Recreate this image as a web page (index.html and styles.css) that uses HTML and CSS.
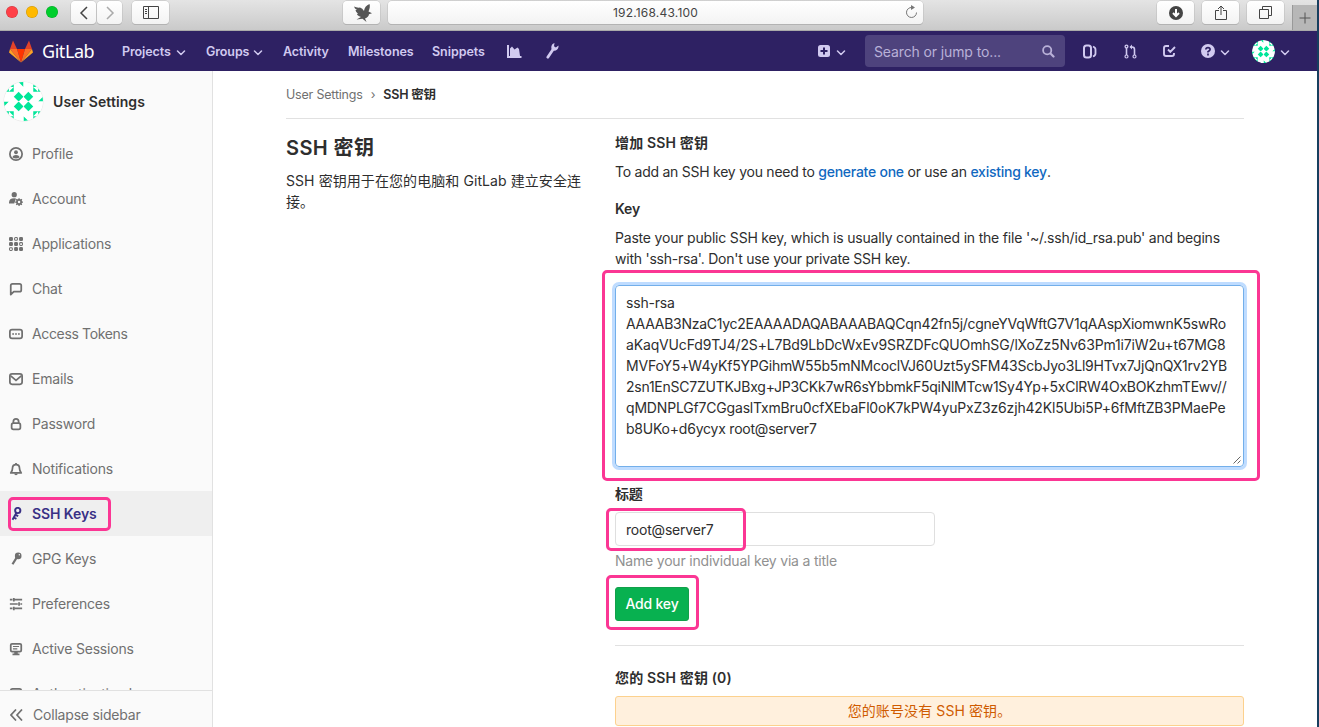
FILE: index.html
```html
<!DOCTYPE html>
<html lang="zh"><head><meta charset="utf-8"><title>SSH 密钥</title><link rel="stylesheet" href="styles.css"></head>
<body>
<svg class="defs" width="0" height="0">
<symbol id="chev" viewBox="0 0 10 6"><path d="M1.500 1L5 4.500 8.500 1" fill="none" stroke="currentColor" stroke-width="1.500" stroke-linecap="round" stroke-linejoin="round"/></symbol>
<symbol id="quad" viewBox="0 0 20 20"><path d="M15 10l5 5-5 5-5-5zM15 0H20V5zM10 0V5H5zM10 5V10H5zM5 5V10H0z" fill="#00e699"/></symbol>
<symbol id="avatar" viewBox="0 0 40 40"><circle cx="20" cy="20" r="20" fill="#fff"/><use href="#quad" width="20" height="20"/><use href="#quad" width="20" height="20" transform="rotate(90 20 20)"/><use href="#quad" width="20" height="20" transform="rotate(180 20 20)"/><use href="#quad" width="20" height="20" transform="rotate(270 20 20)"/></symbol>
</svg>
<div class="window">
<header class="chrome">
 <div class="lights"><i class="red"></i><i class="amber"></i><i class="green"></i></div>
 <div class="key back"><svg width="10" height="14" viewBox="0 0 10 14"><path d="M8 1L2 7l6 6" fill="none" stroke="#444" stroke-width="1.500"/></svg></div>
 <div class="key fwd"><svg width="10" height="14" viewBox="0 0 10 14"><path d="M2 1l6 6-6 6" fill="none" stroke="#aaa" stroke-width="1.500"/></svg></div>
 <div class="key panel"><svg width="16" height="13" viewBox="0 0 16 13"><path d="M.5.5h15v12H.5zM5.500.5v12M2 3.500h2M2 5.500h2M2 7.500h2" fill="none" stroke="#444"/></svg></div>
 <div class="key bird"><svg width="18" height="18" viewBox="0 0 18 18"><path d="M0 2.500Q3 4 6 3.500 8.500 4 10 7 10.500 2 15.500 0 16.500 3 14.500 7.500L18 9.200l-3 1q-.5 3-4 4.300l1.500 3.500-4-3.200-6 .7 4.500-2.500Q3 11.500 3 10l1-.3Q1.500 7.500 1.500 6L3 6Q.5 4.500 0 2.500z" fill="#555"/></svg></div>
 <div class="key address"><span class="url">192.168.43.100</span><svg class="reload" width="13" height="14" viewBox="0 0 13 14"><path d="M7 2.500A5 5 0 1 0 11.500 7.500" fill="none" stroke="#777"/><path d="M6 0l4 2.500L6 5z" fill="#777"/></svg></div>
 <div class="key download"><svg width="14" height="14" viewBox="0 0 14 14"><circle cx="7" cy="7" r="7" fill="#444"/><path d="M7 3v6M4 7l3 3 3-3" fill="none" stroke="#fff" stroke-width="2"/></svg></div>
 <div class="key share"><svg width="12" height="16" viewBox="0 0 12 16"><path d="M4 5.500H.5v9h11v-9H8M6 10V1M3 4l3-3 3 3" fill="none" stroke="#444"/></svg></div>
 <div class="key tabs"><svg width="13" height="13" viewBox="0 0 13 13"><path d="M.5 3.500h9v9h-9zM3.500 3V.5h9v9H10" fill="none" stroke="#444"/></svg></div>
 <div class="newtab"><svg width="12" height="12" viewBox="0 0 12 12"><path d="M6 .5v11M.5 6h11" stroke="#555"/></svg></div>
</header>
<nav class="navbar">
 <svg class="tanuki" width="24" height="23" viewBox="0 0 24 23"><path d="M4 .5L1 9h7zM20 .5L23 9h-7z" fill="#e24329"/><path d="M12 22.500L8 9h8z" fill="#ff3300"/><path d="M12 22.500L1 9h7zM12 22.500L23 9h-7z" fill="#fc6d26"/><path d="M1 9L0 12.500 12 22.500zM23 9l1 3.500-12 10z" fill="#fca326"/></svg>
 <span class="brand">GitLab</span>
 <span class="link n1">Projects</span><svg class="chev c1" width="10" height="6"><use href="#chev"/></svg>
 <span class="link n2">Groups</span><svg class="chev c2" width="10" height="6"><use href="#chev"/></svg>
 <span class="link n3">Activity</span><span class="link n4">Milestones</span><span class="link n5">Snippets</span>
 <svg class="i-chart" width="15" height="13" viewBox="0 0 15 13"><path d="M1 0v12h13.500" fill="none" stroke="currentColor" stroke-width="2"/><path d="M3 11V3.500L5 1.500 7.500 4.500 9 3.500 10.500 2.500 12 4l1 7z" fill="currentColor"/></svg>
 <svg class="i-wrench" width="13" height="16" viewBox="0 0 13 16"><path d="M1.800 14.200L7 6.500" stroke="currentColor" stroke-width="2.800" stroke-linecap="round"/><path d="M8.500 0C5.500 1 4.700 4 5.800 6.500c2 2 5.700 1.500 6.700-2.500V2.500L9.800 4.500 8 3.200z" fill="currentColor"/></svg>
 <svg class="i-plus" width="12" height="12" viewBox="0 0 12 12"><rect width="12" height="12" rx="2.500" fill="currentColor"/><path d="M6 2.500v7M2.500 6h7" stroke="#2e2163" stroke-width="2"/></svg><svg class="chev c3" width="10" height="6"><use href="#chev"/></svg>
 <div class="search"><span>Search or jump to...</span><svg width="13" height="13" viewBox="0 0 13 13"><circle cx="5.200" cy="5.200" r="4.100" fill="none" stroke="currentColor" stroke-width="1.800"/><path d="M8.500 8.500l3 3" stroke="currentColor" stroke-width="2.200" stroke-linecap="round"/></svg></div>
 <svg class="i-issues" width="14" height="15" viewBox="0 0 14 15"><rect x="1" y="1.500" width="7" height="12" rx="2.500" fill="none" stroke="currentColor" stroke-width="2"/><path d="M10 2.500q2.500 1 2.500 3v4q0 2-2.500 3" fill="none" stroke="currentColor" stroke-width="1.800"/></svg>
 <svg class="i-merge" width="13" height="15" viewBox="0 0 13 15"><path d="M2.500 4v7M10.500 11V5.500Q10.500 3 8 3H6.500" fill="none" stroke="currentColor" stroke-width="1.600"/><circle cx="2.500" cy="2.500" r="1.400" fill="none" stroke="currentColor" stroke-width="1.300"/><circle cx="2.500" cy="12.500" r="1.500" fill="none" stroke="currentColor" stroke-width="1.200"/><circle cx="10.500" cy="12.500" r="1.500" fill="none" stroke="currentColor" stroke-width="1.200"/><path d="M8 .5v5L5.500 3z" fill="currentColor"/></svg>
 <svg class="i-todo" width="13" height="12" viewBox="0 0 13 12"><path d="M6 1H3Q1 1 1 3v6q0 2 2 2h6q2 0 2-2V8M5 4.500l2.300 2.300L12 2" fill="none" stroke="currentColor" stroke-width="1.900"/></svg>
 <svg class="i-help" width="14" height="14" viewBox="0 0 14 14"><circle cx="7" cy="7" r="7" fill="currentColor"/><path d="M4.800 5.500Q5 3.700 7 3.700t2.100 1.800Q9.100 6.500 7 7.700v.8M7 9.500v2" fill="none" stroke="#2e2163" stroke-width="1.700"/></svg><svg class="chev c4" width="10" height="6"><use href="#chev"/></svg>
 <svg class="face" width="23" height="23"><use href="#avatar"/></svg><svg class="chev c5" width="10" height="6"><use href="#chev"/></svg>
</nav>
<div class="page">
<aside class="sidebar">
 <div class="context"><svg class="portrait" width="39" height="39"><use href="#avatar"/></svg><strong>User Settings</strong></div>
 <ul class="menu">
 <li><svg viewBox="0 0 16 16"><circle cx="8" cy="8" r="7" fill="none" stroke="currentColor" stroke-width="2"/><circle cx="8" cy="6" r="2.200" fill="currentColor"/><path d="M4 12q0-3 4-3t4 3q-4 2.500-8 0" fill="currentColor"/></svg><span>Profile</span></li>
 <li><svg viewBox="0 0 16 16"><circle cx="6" cy="3" r="3" fill="currentColor"/><path d="M0 13v-1q0-5 6-5l2 .3L6 13z" fill="currentColor"/><circle cx="11.500" cy="11.500" r="2.400" fill="none" stroke="currentColor" stroke-width="2"/><path d="M11.500 7v2m0 5v2M7 11.500h2m5 0h2M8.300 8.300l1.400 1.400m3.600 3.600l1.400 1.400m0-6.400l-1.400 1.400m-3.600 3.600l-1.400 1.400" stroke="currentColor" stroke-width="1.500"/></svg><span>Account</span></li>
 <li><svg viewBox="0 0 16 16"><g fill="currentColor"><rect width="4.500" height="4.500" rx="1.500"/><rect x="11.500" width="4.500" height="4.500" rx="1.500"/><rect y="5.800" width="4.500" height="4.500" rx="1.500"/><rect x="5.800" y="5.800" width="4.500" height="4.500" rx="1.500"/><rect x="5.800" y="11.500" width="4.500" height="4.500" rx="1.500"/><rect x="11.500" y="11.500" width="4.500" height="4.500" rx="1.500"/></g><g fill="none" stroke="currentColor" stroke-width="1.200"><rect x="6.400" y=".6" width="3.200" height="3.200" rx="1"/><rect x="12.200" y="6.400" width="3.200" height="3.200" rx="1"/><rect x=".6" y="12.200" width="3.200" height="3.200" rx="1"/></g></svg><span>Applications</span></li>
 <li><svg viewBox="0 0 16 16"><path d="M2 14.500V4q0-2 2-2h8q2 0 2 2v5q0 2-2 2H5.500z" fill="none" stroke="currentColor" stroke-width="2" stroke-linejoin="round"/></svg><span>Chat</span></li>
 <li class="tokens"><svg viewBox="0 0 16 16"><rect x="1" y="3" width="14" height="10" rx="2.500" fill="none" stroke="currentColor" stroke-width="2"/><path d="M3.700 8h2m1.300 0h2m1.300 0h2" stroke="currentColor" stroke-width="1.800"/></svg><span>Access Tokens</span></li>
 <li><svg viewBox="0 0 16 16"><rect x="1" y="2" width="14" height="12" rx="2.500" fill="none" stroke="currentColor" stroke-width="2"/><path d="M2 4.500l6 5 6-5" fill="none" stroke="currentColor" stroke-width="2"/></svg><span>Emails</span></li>
 <li><svg viewBox="0 0 16 16"><rect x="3" y="7" width="10" height="7" rx="2" fill="none" stroke="currentColor" stroke-width="2"/><path d="M5 7V5q0-3 3-3t3 3v2" fill="none" stroke="currentColor" stroke-width="2"/></svg><span>Password</span></li>
 <li><svg viewBox="0 0 16 16"><path d="M2 12.500Q4 10 4 7q0-4 4-4t4 4q0 3 2 5.500z" fill="none" stroke="currentColor" stroke-width="2" stroke-linejoin="round"/><path d="M7 1h2v2H7zM6 13h4q0 2-2 2t-2-2" fill="currentColor"/></svg><span>Notifications</span></li>
 <li class="active"><svg viewBox="0 0 16 16"><circle cx="10" cy="4" r="3" fill="none" stroke="currentColor" stroke-width="2.200"/><path d="M8.500 6.500L4 14.500M7.500 9l3 1.500M5.500 12l3 1.500" stroke="currentColor" stroke-width="2.200"/></svg><span>SSH Keys</span><b class="mark m-nav"></b></li>
 <li><svg viewBox="0 0 16 16"><circle cx="10.500" cy="4.500" r="3.800" fill="currentColor"/><path d="M9 6L4 14" stroke="currentColor" stroke-width="2.600"/><circle cx="11.800" cy="3.200" r=".8" fill="#fafafa"/></svg><span>GPG Keys</span></li>
 <li><svg viewBox="0 0 16 16"><path d="M1 3h3m1 0h10M1 8h9m3 0h2M1 13h3m2 0h9" stroke="currentColor" stroke-width="1.800"/><path d="M5.500 1v4M11.500 6v4M5.500 11v4" stroke="currentColor" stroke-width="2"/></svg><span>Preferences</span></li>
 <li><svg viewBox="0 0 16 16"><rect x="2" y="2" width="12" height="9" rx="1.500" fill="none" stroke="currentColor" stroke-width="2"/><path d="M4.500 5.200h7M4.500 7.800h5" stroke="currentColor" stroke-width="1.300"/><path d="M6 11h4v2h2v2H4v-2h2z" fill="currentColor"/></svg><span>Active Sessions</span></li>
 <li><svg viewBox="0 0 16 16"><rect x="2" y="2" width="12" height="12" rx="2" fill="none" stroke="currentColor" stroke-width="2"/></svg><span>Authentication log</span></li>
 </ul>
 <div class="collapse"><svg width="13" height="12" viewBox="0 0 13 12"><path d="M6 .5L1 6l5 5.500M12 .5L7 6l5 5.500" fill="none" stroke="currentColor" stroke-width="1.700"/></svg><span>Collapse sidebar</span></div>
</aside>
<main class="content">
 <div class="crumbs"><span class="t-crumb">User Settings</span><i>›</i><strong>SSH 密钥</strong></div>
 <div class="columns">
 <section class="about"><h1>SSH 密钥</h1><p>SSH 密钥用于在您的电脑和 GitLab 建立安全连接。</p></section>
 <section class="form">
 <h5>增加 SSH 密钥</h5>
 <p class="intro">To add an SSH key you need to <a>generate one</a> or use an <a>existing key</a>.</p>
 <label class="l-key">Key</label>
 <p class="help"><span class="h1">Paste your public SSH key, which is usually contained in the file '~/.ssh/id_rsa.pub' and begins</span><br><span class="h2">with 'ssh-rsa'. Don't use your private SSH key.</span></p>
 <div class="keybox"><span>ssh-rsa</span><span class="k1">AAAAB3NzaC1yc2EAAAADAQABAAABAQCqn42fn5j/cgneYVqWftG7V1qAAspXiomwnK5swRo</span><span class="k2">aKaqVUcFd9TJ4/2S+L7Bd9LbDcWxEv9SRZDFcQUOmhSG/lXoZz5Nv63Pm1i7iW2u+t67MG8</span><span class="k3">MVFoY5+W4yKf5YPGihmW55b5mNMcoclVJ60Uzt5ySFM43ScbJyo3Ll9HTvx7JjQnQX1rv2YB</span><span class="k4">2sn1EnSC7ZUTKJBxg+JP3CKk7wR6sYbbmkF5qiNlMTcw1Sy4Yp+5xClRW4OxBOKzhmTEwv//</span><span class="k5">qMDNPLGf7CGgaslTxmBru0cfXEbaFl0oK7kPW4yuPxZ3z6zjh42Kl5Ubi5P+6fMftZB3PMaePe</span><span class="k6">b8UKo+d6ycyx root@server7</span>
 <svg class="grip" width="8" height="8" viewBox="0 0 8 8"><path d="M.5 7.500l7-7M4.500 7.500l3-3" stroke="#555" stroke-width=".9"/></svg><b class="mark m-key"></b></div>
 <label class="l-title">标题</label>
 <div class="field"><span>root@server7</span><b class="mark m-field"></b></div>
 <p class="hint">Name your individual key via a title</p>
 <div class="submit">Add key<b class="mark m-submit"></b></div>
 <hr>
 <h5 class="count">您的 SSH 密钥 (0)</h5>
 <div class="notice">您的账号没有 SSH 密钥。</div>
 </section>
 </div>
</main>
</div>
</div>
</body></html>
```
FILE: styles.css
```css
*{box-sizing:border-box}
body{margin:0;width:1319px;height:727px;overflow:hidden;background:#173f5f;font:14px/21px Inter,"Noto Sans CJK SC",sans-serif;letter-spacing:-.2px;color:#2e2e2e}
svg{display:block;flex:none}
.defs{position:absolute}
.window{width:1317px;height:727px;background:#fff;display:flex;flex-direction:column}
.chrome{height:31px;flex:none;display:flex;align-items:flex-start;background:linear-gradient(#e4e4e4,#cacaca);border-bottom:1px solid #aaa}
.lights{display:flex;gap:8px;padding:6px 0 0 6px;width:71px}
.lights i{width:12px;height:12px;border-radius:50%;background:#ff4048;box-shadow:inset 0 0 0 .5px #0003}
.lights .amber{background:#ffb900}.lights .green{background:#00ce2c}
.key{height:23px;margin-top:1px;background:linear-gradient(#fff,#f3f3f3);border-radius:4px;box-shadow:0 0 0 .5px #bbb,0 1px 0 #aaa;display:flex;align-items:center;justify-content:center;flex:none}
.back{width:25px}.fwd{width:25px;margin-left:1px}.panel{width:37px;margin-left:10px}
.bird{width:37px;margin-left:174px;padding-left:2px}.address{width:535px;margin-left:8px;position:relative}
.url{font-size:12px;letter-spacing:.2px;color:#444}.reload{position:absolute;right:5px;top:4px}
.download{width:37px;margin-left:234px}.share{width:37px;margin-left:8px}.tabs{width:37px;margin-left:8px}
.newtab{width:25px;height:25px;margin:5px 0 0 auto;background:#b7b7b7;border-left:1px solid #999;display:flex;align-items:center;justify-content:center}
.navbar{height:40px;flex:none;background:#2e2163;color:#d1caf0;display:flex;align-items:center;white-space:nowrap}
.tanuki{margin-left:9px}.brand{margin-left:9px;width:53px;font-size:18px;letter-spacing:-.45px;color:#fff;font-family:"Noto Sans"}
.link{font-size:12.500px;font-weight:600;letter-spacing:-.1px}
.n1{margin-left:27px;width:49px}.n2{margin-left:20px;width:43px}.n3{margin-left:20px;width:45px}.n4{margin-left:20px;width:64px}.n5{margin-left:20px;width:52px}
.n4,.n5{letter-spacing:-.05px}
.chev{margin-top:3px}.c1{margin-left:5px}.c2{margin-left:4px}
.i-chart{margin-left:23px}.i-wrench{margin-left:24px}.i-plus{margin-left:259px}.c3{margin-left:6px}
.search{margin-left:19px;width:200px;height:32px;border-radius:4px;background:#4e437d;display:flex;align-items:center;justify-content:space-between;padding:1px 10px 0 9px;color:#b9b1d8;letter-spacing:-.12px}
.i-issues{margin-left:18px}.i-merge{margin-left:27px}.i-todo{margin-left:26px}.i-help{margin-left:25px}.c4{margin-left:5px}.face{margin-left:22px;border-radius:50%}.c5{margin-left:5px}
.page{display:flex;flex:1;min-height:0}
.sidebar{width:213px;border-right:1px solid #e1e1e1;background:#fafafa;display:flex;flex-direction:column}
.context{display:flex;align-items:center;height:60px;padding:1px 0 0 4px;gap:10px;flex:none}
.context strong{font-weight:600;letter-spacing:.08px}
.portrait{border-radius:50%;box-shadow:0 0 0 .5px #e8e8e8}
.menu{list-style:none;margin:0;padding:0;flex:1;min-height:0;overflow:hidden}
.menu li{height:45px;display:flex;align-items:center;padding-left:9px;gap:9px;color:#707070;position:relative}
.menu li svg{width:14px;height:14px}
.menu .tokens{letter-spacing:-.35px}
.menu .active{background:#efefef;color:#393085;font-weight:600;letter-spacing:-.1px}
.collapse{height:37px;flex:none;border-top:1px solid #e1e1e1;display:flex;align-items:center;padding:11px 0 0 10px;gap:10px;color:#707070}
.mark{position:absolute;border:3px solid #fb3694;border-radius:5px}
.m-nav{left:8px;top:6px;width:103px;height:34px}
.content{width:958px;margin-left:73px}
.crumbs{height:48px;border-bottom:1px solid #e1e1e1;font-size:12.500px;display:flex;align-items:center;color:#707070}
.crumbs i{font-style:normal;margin:0 8px}.crumbs strong{color:#2e2e2e;font-weight:600}
.columns{display:flex}
.about{width:329px}
h1{font-size:20px;line-height:26px;font-weight:600;margin:16px 0 9px;letter-spacing:.4px}
.about p{margin:0;width:300px;letter-spacing:.08px}
.form{width:629px;white-space:nowrap}
h5{font-size:14px;line-height:21px;margin:13px 0 8px;font-weight:600;letter-spacing:.15px}
p{margin:0}.intro{height:37px;letter-spacing:-.25px}
a{color:#1068bf;font-weight:500}
label{display:block;font-weight:600}
.help{margin:8px 0 16px}
.h1{letter-spacing:-.195px}.h2{letter-spacing:-.23px}
.keybox{position:relative;height:182px;border:1px solid #73afea;border-radius:4px;box-shadow:0 0 0 3px #bfdcff;padding:6px 10px}
.keybox span{display:block}
.k1{letter-spacing:-.27px}.k2{letter-spacing:-.155px}.k3{letter-spacing:-.21px}.k4{letter-spacing:-.25px}.k5{letter-spacing:-.18px}.k6{letter-spacing:-.22px}
.grip{position:absolute;right:2px;bottom:2px}
.m-key{left:-14px;top:-16px;width:658px;height:211px}
.l-title{margin-top:16px}
.field{position:relative;margin-top:8px;width:320px;height:34px;border:1px solid #dfdfdf;border-radius:4px;padding:6px 10px}
.m-field{left:-10px;top:-5px;width:140px;height:43px}
.hint{color:#919191;margin-top:4px}
.submit{position:relative;margin-top:16px;width:74px;height:34px;border:1px solid #12a04a;border-radius:3px;background:#08b150;color:#fff;font-weight:500;text-align:center;line-height:32px}
.m-submit{left:-10px;top:-13px;width:93px;height:55px}
hr{border:0;border-top:1px solid #e1e1e1;margin:24px 0 21px}
.count{margin:0 0 8px}
.notice{height:30px;border:1px solid #fcd18e;border-radius:3px;background:#fff0dd;color:#cf5b00;text-align:center;line-height:28px;letter-spacing:.1px}
```
